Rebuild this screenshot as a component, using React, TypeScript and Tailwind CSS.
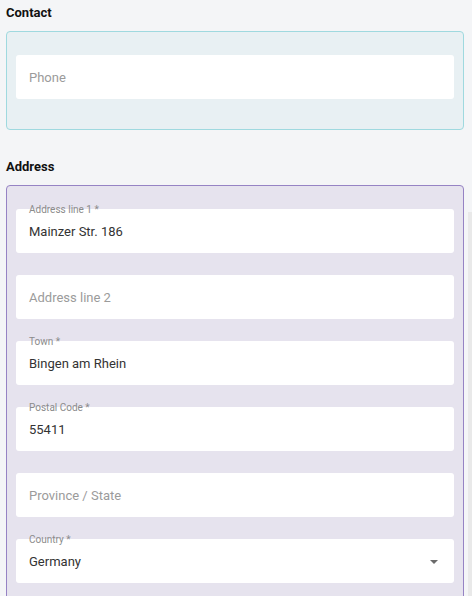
import React from "react"

type FieldProps = {
  label?: string
  value?: string
  placeholder?: string
  select?: boolean
}

function Field({ label, value, placeholder, select }: FieldProps) {
  return (
    <div className="relative flex h-[44px] items-center rounded-[3px] bg-white pl-[13px] pr-[16px]">
      {label && (
        <span className="absolute left-[13px] top-[-5px] text-[10px] leading-[12px] text-[#8b8b8b]">
          {label}
        </span>
      )}
      {value ? (
        <span className={`text-[13px] text-[#333333] ${label ? "mt-[2px]" : ""}`}>{value}</span>
      ) : (
        <span className="mt-[2px] text-[13px] text-[#9b9b9b]">{placeholder}</span>
      )}
      {select && (
        <span className="ml-auto mt-[2px] h-0 w-0 border-x-[4px] border-t-[4px] border-x-transparent border-t-[#6b6b6b]" />
      )}
    </div>
  )
}

export default function App() {
  return (
    <div
      className="h-[596px] w-[472px] overflow-hidden bg-[#f4f5f7] pl-[6px] pt-[4px]"
      style={{ fontFamily: "Roboto, 'Noto Sans', sans-serif" }}
    >
      {/* Contact */}
      <h2 className="mb-[9px] text-[13px] font-bold leading-[18px] text-[#111111]">Contact</h2>
      <div className="w-[458px] rounded-[4px] border border-[#9fd9df] bg-[#e8f0f3] px-[9px] pb-[30px] pt-[23px]">
        <Field placeholder="Phone" />
      </div>

      {/* Address */}
      <h2 className="mb-[9px] mt-[28px] text-[13px] font-bold leading-[18px] text-[#111111]">Address</h2>
      <div className="flex items-start gap-[4px]">
        <div className="flex w-[458px] flex-col gap-[22px] rounded-[4px] border border-[#9683c4] bg-[#e6e3ee] px-[9px] pb-[30px] pt-[23px]">
          <Field label="Address line 1 *" value="Mainzer Str. 186" />
          <Field placeholder="Address line 2" />
          <Field label="Town *" value="Bingen am Rhein" />
          <Field label="Postal Code *" value="55411" />
          <Field placeholder="Province / State" />
          <Field label="Country *" value="Germany" select />
        </div>
        <div className="mt-[27px] h-[400px] w-[4px] bg-[#e9e9e9]" />
      </div>
    </div>
  )
}
